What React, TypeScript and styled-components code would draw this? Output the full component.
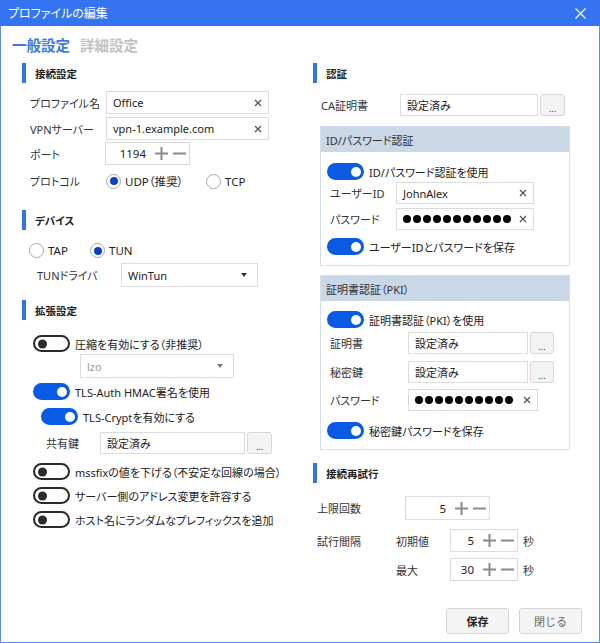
import React from "react";
import styled, { createGlobalStyle } from "styled-components";

const Global = createGlobalStyle`
  html, body { margin: 0; padding: 0; background: #fff; }
  body {
    font-family: "Noto Sans", "Noto Sans CJK JP", sans-serif;
    font-size: 11px;
    color: #333;
    font-feature-settings: "palt";
  }
  * { box-sizing: border-box; }
`;

const Window = styled.div`
  width: 600px;
  height: 643px;
  border: 1px solid #5b8ff5;
  border-top: none;
  display: flex;
  flex-direction: column;
  background: #fff;
`;

const TitleBar = styled.div`
  height: 26px;
  margin: 0 -1px;
  background: #3574f0;
  color: #fff;
  display: flex;
  align-items: center;
  justify-content: space-between;
  padding: 0 14px 0 8px;
  font-size: 12px;
`;

const Tabs = styled.div`
  display: flex;
  gap: 10px;
  margin-top: 8px;
  padding-left: 11px;
  height: 20px;
  align-items: center;
`;

const Tab = styled.div<{ $active?: boolean }>`
  font-size: 14.5px;
  font-weight: 700;
  font-feature-settings: normal;
  color: ${(p) => (p.$active ? "#3c78e6" : "#c2c2c2")};
`;

const Columns = styled.div`
  display: grid;
  grid-template-columns: 291px 270px;
  padding-left: 21px;
  margin-top: 9px;
`;

const Column = styled.div`
  display: flex;
  flex-direction: column;
`;

const Item = styled.div<{ $mt?: number; $ml?: number }>`
  margin-top: ${(p) => p.$mt ?? 0}px;
  margin-left: ${(p) => p.$ml ?? 0}px;
`;

const SectionHead = styled.div<{ $mt?: number }>`
  display: flex;
  align-items: center;
  height: 20px;
  margin-top: ${(p) => p.$mt ?? 0}px;
  font-weight: 700;
  font-size: 10.5px;
  color: #222;
  &::before {
    content: "";
    width: 4px;
    height: 20px;
    background: #2f74e2;
    margin-right: 9px;
  }
`;

const Row = styled.div<{ $mt?: number; $pl?: number; $label: number; $h?: number }>`
  display: grid;
  grid-template-columns: ${(p) => p.$label}px auto;
  align-items: center;
  margin-top: ${(p) => p.$mt ?? 0}px;
  padding-left: ${(p) => p.$pl ?? 0}px;
  height: ${(p) => p.$h ?? 22}px;
`;

const Label = styled.span<{ $w?: number }>`
  color: #333;
  white-space: nowrap;
  ${(p) => (p.$w ? `width: ${p.$w}px;` : "")}
`;

const Controls = styled.div`
  display: flex;
  align-items: center;
  gap: 2px;
  height: 100%;
`;

const Field = styled.div<{ $w: number; $muted?: boolean }>`
  width: ${(p) => p.$w}px;
  height: 100%;
  border: 1px solid #dcdcdc;
  background: #fff;
  display: flex;
  align-items: center;
  justify-content: space-between;
  padding: 0 6px 0 6px;
  color: ${(p) => (p.$muted ? "#9a9a9a" : "#222")};
  overflow: hidden;
  white-space: nowrap;
`;

const Dots = styled.span`
  display: flex;
  gap: 2px;
  overflow: hidden;
  flex: 1;
  margin-right: 8px;
`;

const Dot = styled.span`
  flex: none;
  width: 8px;
  height: 8px;
  border-radius: 50%;
  background: #000;
`;

const DotsButton = styled.button<{ $w: number }>`
  width: ${(p) => p.$w}px;
  height: 100%;
  background: #f3f3f3;
  border: 1px solid #d8d8d8;
  border-radius: 3px;
  font-family: inherit;
  font-size: 9px;
  color: #333;
  padding: 6px 0 0;
  line-height: 1;
`;

const Caret = styled.span<{ $muted?: boolean }>`
  width: 0;
  height: 0;
  border-left: 3px solid transparent;
  border-right: 3px solid transparent;
  border-top: 4px solid ${(p) => (p.$muted ? "#777" : "#333")};
  margin-right: 4px;
`;

const Spin = styled.div<{ $w: number }>`
  width: ${(p) => p.$w}px;
  height: 100%;
  border: 1px solid #dcdcdc;
  display: flex;
  align-items: center;
  justify-content: flex-end;
  padding-right: 2px;
  gap: 3px;
  color: #222;
  font-size: 11.5px;
`;

const SpinValue = styled.span`
  margin-right: 5px;
`;

const Unit = styled.span`
  margin-left: 3px;
`;

const Radios = styled.div`
  display: flex;
  align-items: center;
`;

const RadioOption = styled.label<{ $w?: number }>`
  display: flex;
  align-items: center;
  gap: 4px;
  width: ${(p) => (p.$w ? `${p.$w}px` : "auto")};
  font-size: 11.5px;
  color: #222;
`;

const RadioCircle = styled.span<{ $on?: boolean }>`
  width: 15px;
  height: 15px;
  border-radius: 50%;
  border: 1px solid #a8a8a8;
  background: #fff;
  display: flex;
  align-items: center;
  justify-content: center;
  &::after {
    content: "";
    width: 8px;
    height: 8px;
    border-radius: 50%;
    background: ${(p) => (p.$on ? "#0a3fcc" : "transparent")};
  }
`;

const ToggleRow = styled.div<{ $mt?: number; $ml?: number }>`
  display: flex;
  align-items: center;
  gap: 5px;
  margin-top: ${(p) => p.$mt ?? 0}px;
  margin-left: ${(p) => p.$ml ?? 0}px;
  height: 17px;
  color: #222;
  font-size: 11px;
  white-space: nowrap;
`;

const Toggle = styled.span<{ $on?: boolean }>`
  position: relative;
  width: 37px;
  height: 17px;
  border-radius: 9px;
  flex: none;
  background: ${(p) => (p.$on ? "#0a5ae6" : "#fff")};
  border: 2px solid ${(p) => (p.$on ? "#0a5ae6" : "#2b2b2b")};
  &::after {
    content: "";
    position: absolute;
    top: 50%;
    transform: translateY(-50%);
    width: ${(p) => (p.$on ? 10 : 9)}px;
    height: ${(p) => (p.$on ? 10 : 9)}px;
    border-radius: 50%;
    background: ${(p) => (p.$on ? "#fff" : "#2b2b2b")};
    left: ${(p) => (p.$on ? "22px" : "3px")};
  }
`;

const Group = styled.div<{ $mt?: number }>`
  margin-top: ${(p) => p.$mt ?? 0}px;
  margin-left: 7px;
  width: 250px;
  border: 1px solid #d5dfeb;
`;

const GroupHead = styled.div`
  height: 25px;
  background: #c9d7e7;
  display: flex;
  align-items: center;
  padding-left: 5px;
  color: #333;
`;

const GroupBody = styled.div<{ $pt: number; $pb: number }>`
  padding: ${(p) => p.$pt}px 0 ${(p) => p.$pb}px 6px;
  display: flex;
  flex-direction: column;
`;

const Footer = styled.div`
  margin-top: auto;
  display: flex;
  justify-content: flex-end;
  gap: 10px;
  padding: 0 17px 8px 0;
`;

const Button = styled.button<{ $primary?: boolean }>`
  width: 63px;
  height: 26px;
  background: #f4f4f4;
  border: 1px solid #d4d4d4;
  border-radius: 3px;
  font-family: inherit;
  font-size: 11px;
  font-weight: ${(p) => (p.$primary ? 700 : 400)};
  color: ${(p) => (p.$primary ? "#222" : "#666")};
`;

const ClearX = () => (
  <svg width="8" height="8" viewBox="0 0 8 8" style={{ flex: "none" }}>
    <path d="M1 1L7 7M7 1L1 7" stroke="#555" strokeWidth="1.3" />
  </svg>
);

const PlusIcon = () => (
  <svg width="15" height="15" viewBox="0 0 15 15">
    <path d="M1 7.5H14M7.5 1V14" stroke="#8a8a8a" strokeWidth="2" />
  </svg>
);

const MinusIcon = () => (
  <svg width="15" height="15" viewBox="0 0 15 15">
    <path d="M1 7.5H14" stroke="#8a8a8a" strokeWidth="2" />
  </svg>
);

const CloseIcon = () => (
  <svg width="11" height="11" viewBox="0 0 11 11">
    <path d="M0.5 0.5L10.5 10.5M10.5 0.5L0.5 10.5" stroke="#fff" strokeWidth="1.2" />
  </svg>
);

const SpinBox = ({ w, value }: { w: number; value: string }) => (
  <Spin $w={w}>
    <SpinValue>{value}</SpinValue>
    <PlusIcon />
    <MinusIcon />
  </Spin>
);

const TextField = ({ w, value, clear }: { w: number; value: string; clear?: boolean }) => (
  <Field $w={w}>
    <span>{value}</span>
    {clear && <ClearX />}
  </Field>
);

const PasswordField = ({ w }: { w: number }) => (
  <Field $w={w} aria-label="password">
    <Dots>
      {Array.from({ length: 14 }, (_, i) => (
        <Dot key={i} />
      ))}
    </Dots>
    <ClearX />
  </Field>
);

export default function App() {
  return (
    <>
      <Global />
      <Window>
        <TitleBar>
          <span>プロファイルの編集</span>
          <CloseIcon />
        </TitleBar>
        <Tabs>
          <Tab $active>一般設定</Tab>
          <Tab>詳細設定</Tab>
        </Tabs>
        <Columns>
          <Column>
            <SectionHead>接続設定</SectionHead>
            <Row $mt={8} $pl={8} $label={76} $h={23}>
              <Label>プロファイル名</Label>
              <TextField w={163} value="Office" clear />
            </Row>
            <Row $mt={3} $pl={8} $label={76} $h={23}>
              <Label>VPNサーバー</Label>
              <TextField w={163} value="vpn-1.example.com" clear />
            </Row>
            <Row $mt={2} $pl={8} $label={75} $h={23}>
              <Label>ポート</Label>
              <SpinBox w={85} value="1194" />
            </Row>
            <Row $mt={7} $pl={8} $label={76} $h={18}>
              <Label>プロトコル</Label>
              <Radios>
                <RadioOption $w={100}>
                  <RadioCircle $on />
                  UDP（推奨）
                </RadioOption>
                <RadioOption>
                  <RadioCircle />
                  TCP
                </RadioOption>
              </Radios>
            </Row>

            <SectionHead $mt={20}>デバイス</SectionHead>
            <Item $mt={13} $ml={7}>
              <Radios>
                <RadioOption $w={61}>
                  <RadioCircle />
                  TAP
                </RadioOption>
                <RadioOption>
                  <RadioCircle $on />
                  TUN
                </RadioOption>
              </Radios>
            </Item>
            <Row $mt={5} $pl={15} $label={84} $h={24}>
              <Label>TUNドライバ</Label>
              <Field $w={137}>
                <span>WinTun</span>
                <Caret />
              </Field>
            </Row>

            <SectionHead $mt={13}>拡張設定</SectionHead>
            <ToggleRow $mt={15} $ml={11}>
              <Toggle />
              圧縮を有効にする（非推奨）
            </ToggleRow>
            <Row $mt={2} $pl={58} $label={0} $h={24}>
              <span />
              <Field $w={154} $muted>
                <span>lzo</span>
                <Caret $muted />
              </Field>
            </Row>
            <ToggleRow $mt={5} $ml={11}>
              <Toggle $on />
              TLS-Auth HMAC署名を使用
            </ToggleRow>
            <ToggleRow $mt={8} $ml={19}>
              <Toggle $on />
              TLS-Cryptを有効にする
            </ToggleRow>
            <Row $mt={7} $pl={24} $label={54} $h={22}>
              <Label>共有鍵</Label>
              <Controls>
                <TextField w={145} value="設定済み" />
                <DotsButton $w={25}>...</DotsButton>
              </Controls>
            </Row>
            <ToggleRow $mt={9} $ml={11}>
              <Toggle />
              mssfixの値を下げる（不安定な回線の場合）
            </ToggleRow>
            <ToggleRow $mt={7} $ml={11}>
              <Toggle />
              サーバー側のアドレス変更を許容する
            </ToggleRow>
            <ToggleRow $mt={7} $ml={11}>
              <Toggle />
              ホスト名にランダムなプレフィックスを追加
            </ToggleRow>
          </Column>

          <Column>
            <SectionHead>認証</SectionHead>
            <Row $mt={11} $pl={8} $label={79} $h={22}>
              <Label>CA証明書</Label>
              <Controls>
                <TextField w={138} value="設定済み" />
                <DotsButton $w={25}>...</DotsButton>
              </Controls>
            </Row>

            <Group $mt={10}>
              <GroupHead>ID/パスワード認証</GroupHead>
              <GroupBody $pt={11} $pb={10}>
                <ToggleRow>
                  <Toggle $on />
                  ID/パスワード認証を使用
                </ToggleRow>
                <Row $mt={2} $pl={3} $label={66} $h={22}>
                  <Label>ユーザーID</Label>
                  <TextField w={138} value="JohnAlex" clear />
                </Row>
                <Row $mt={4} $pl={3} $label={66} $h={22}>
                  <Label>パスワード</Label>
                  <PasswordField w={138} />
                </Row>
                <ToggleRow $mt={8}>
                  <Toggle $on />
                  ユーザーIDとパスワードを保存
                </ToggleRow>
              </GroupBody>
            </Group>

            <Group $mt={9}>
              <GroupHead>証明書認証（PKI）</GroupHead>
              <GroupBody $pt={10} $pb={10}>
                <ToggleRow>
                  <Toggle $on />
                  証明書認証（PKI）を使用
                </ToggleRow>
                <Row $mt={4} $pl={3} $label={78} $h={22}>
                  <Label>証明書</Label>
                  <Controls>
                    <TextField w={120} value="設定済み" />
                    <DotsButton $w={24}>...</DotsButton>
                  </Controls>
                </Row>
                <Row $mt={7} $pl={3} $label={78} $h={22}>
                  <Label>秘密鍵</Label>
                  <Controls>
                    <TextField w={120} value="設定済み" />
                    <DotsButton $w={24}>...</DotsButton>
                  </Controls>
                </Row>
                <Row $mt={6} $pl={3} $label={78} $h={22}>
                  <Label>パスワード</Label>
                  <PasswordField w={130} />
                </Row>
                <ToggleRow $mt={11}>
                  <Toggle $on />
                  秘密鍵パスワードを保存
                </ToggleRow>
              </GroupBody>
            </Group>

            <SectionHead $mt={13}>接続再試行</SectionHead>
            <Row $mt={13} $pl={4} $label={88} $h={24}>
              <Label>上限回数</Label>
              <SpinBox w={85} value="5" />
            </Row>
            <Row $mt={9} $pl={4} $label={79} $h={23}>
              <Label>試行間隔</Label>
              <Controls>
                <Label $w={52}>初期値</Label>
                <SpinBox w={68} value="5" />
                <Unit>秒</Unit>
              </Controls>
            </Row>
            <Row $mt={6} $pl={4} $label={79} $h={23}>
              <span />
              <Controls>
                <Label $w={52}>最大</Label>
                <SpinBox w={68} value="30" />
                <Unit>秒</Unit>
              </Controls>
            </Row>
          </Column>
        </Columns>
        <Footer>
          <Button $primary>保存</Button>
          <Button>閉じる</Button>
        </Footer>
      </Window>
    </>
  );
}
